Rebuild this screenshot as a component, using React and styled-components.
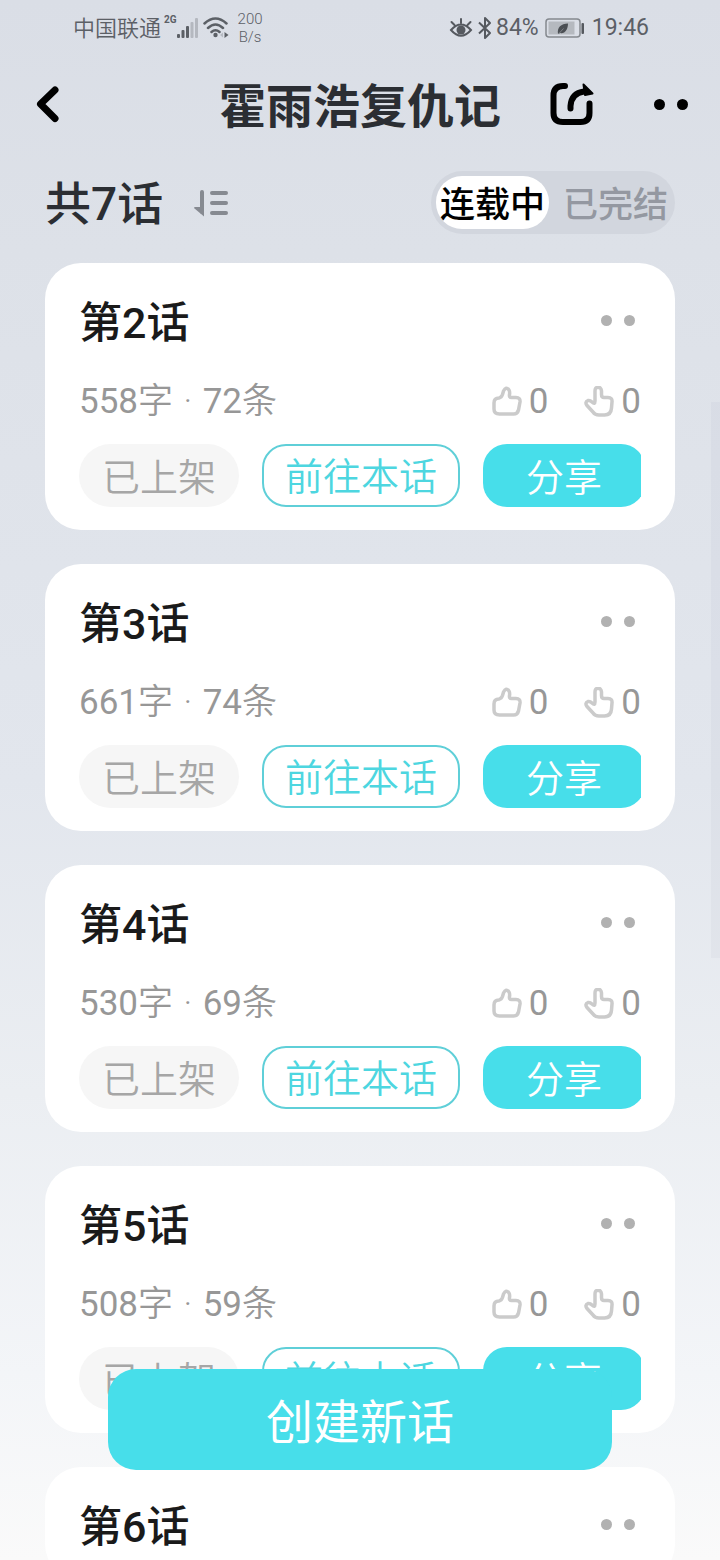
import React, { useState } from "react";
import styled, { createGlobalStyle } from "styled-components";

const GlobalStyle = createGlobalStyle`
  body {
    margin: 0;
  }

  * {
    box-sizing: border-box;
  }

  button {
    margin: 0;
    padding: 0;
    border: none;
    background: none;
    color: inherit;
    font: inherit;
    cursor: pointer;
  }
`;

const Page = styled.div`
  position: relative;
  display: flex;
  flex-direction: column;
  height: 100vh;
  overflow: hidden;
  background: linear-gradient(#dadee6 0%, #dde1e8 16%, #e2e6ed 50%, #ebeef2 70%, #f3f5f8 88%, #fafafa 100%);
  font-family: Roboto, "Noto Sans CJK SC", sans-serif;
  color: #2b2e33;
`;

const StatusBar = styled.div`
  display: flex;
  align-items: center;
  justify-content: space-between;
  height: 56px;
  padding: 0 71px 0 73px;
  flex-shrink: 0;
  font-size: 23px;
  line-height: 28px;
  font-weight: 350;
  color: #5c6066;
`;

const StatusGroup = styled.div`
  display: flex;
  align-items: center;
`;

const Carrier = styled.span`
  padding-top: 2px;
  font-size: 22px;
`;

const NetworkType = styled.span`
  align-self: flex-start;
  padding: 4px 0 0 3px;
  font-size: 10px;
  line-height: 12px;
  font-weight: 700;
`;

const NetSpeed = styled.span`
  margin-left: 7px;
  font-size: 15px;
  line-height: 18px;
  text-align: center;
`;

const Digits = styled.span`
  font-weight: 400;
`;

const Power = styled.span`
  display: flex;
  align-items: center;
  gap: 6px;
  margin: 0 7px 0 3px;
`;

const Header = styled.header`
  display: grid;
  grid-template-columns: 1fr auto 1fr;
  align-items: center;
  height: 96px;
  padding: 0 32px;
  flex-shrink: 0;
`;

const Title = styled.h1`
  margin: 0;
  padding-top: 6px;
  font-size: 47px;
  line-height: 64px;
  font-weight: 700;
`;

const IconButton = styled.button`
  display: flex;
  justify-self: start;
`;

const HeaderActions = styled.div`
  display: flex;
  align-items: center;
  justify-content: space-between;
  padding-left: 49px;
`;

const Dots = styled.span`
  display: flex;
  gap: 12px;

  &::before,
  &::after {
    content: "";
    width: 11px;
    height: 11px;
    border-radius: 50%;
    background: ${(props) => (props.$muted ? "#b1b1b1" : "#000")};
  }
`;

const Toolbar = styled.div`
  display: flex;
  align-items: center;
  height: 111px;
  padding: 0 45px 10px;
  flex-shrink: 0;
`;

const Count = styled.h2`
  margin: 0;
  padding-top: 3px;
  font-size: 46px;
  line-height: 60px;
  font-weight: 500;
`;

const SortButton = styled.button`
  display: flex;
  margin-left: 31px;
`;

const Segment = styled.div`
  display: flex;
  align-items: center;
  gap: 10px;
  margin-left: auto;
  padding: 5px 3px 5px 5px;
  border-radius: 32px;
  background: #d2d6de;
`;

const SegmentButton = styled.button`
  height: 53px;
  padding: 6px 4px 0;
  border-radius: 26px;
  font-size: 35px;
  line-height: 47px;
  font-weight: 500;
  color: ${(props) => (props.$active ? "#000" : "#9498a1")};
  background: ${(props) => (props.$active ? "#fff" : "transparent")};
`;

const List = styled.main`
  display: flex;
  flex-direction: column;
  gap: 34px;
  flex: 1;
  min-height: 0;
  padding: 0 45px;
  overflow-y: auto;
  scrollbar-width: none;
`;

const Card = styled.article`
  flex-shrink: 0;
  padding: 24px 34px 23px;
  border-radius: 36px;
  background: #fff;
`;

const CardHead = styled.div`
  display: flex;
  align-items: center;
  justify-content: space-between;
  padding-right: 6px;
`;

const CardTitle = styled.h3`
  margin: 0;
  padding-top: 6px;
  font-size: 43px;
  line-height: 60px;
  font-weight: 500;
  color: #1a1a1a;
`;

const CardMeta = styled.div`
  display: flex;
  align-items: center;
  justify-content: space-between;
  margin: 24px 0 18px;
  font-size: 35px;
  line-height: 49px;
  font-weight: 350;
  color: #979797;
`;

const Separator = styled.span`
  margin: 0 2px;
`;

const Votes = styled.div`
  display: flex;
  gap: 36px;
`;

const Vote = styled.button`
  display: flex;
  align-items: center;
  gap: 7px;
`;

// the last button runs a little past the edge of the row
const CardActions = styled.div`
  display: flex;
  gap: 23px;
  overflow: hidden;
`;

const ActionButton = styled.button`
  flex: 160 1 160px;
  height: 63px;
  padding-top: 6px;
  border-radius: 24px;
  font-size: 38px;
  line-height: 53px;
  font-weight: 350;
`;

const StateButton = styled(ActionButton)`
  border-radius: 32px;
  background: #f6f6f6;
  color: #a6a6a6;
`;

const OutlineButton = styled(ActionButton)`
  flex: 198 1 198px;
  padding-top: 4px;
  border: 2px solid #5fcfd8;
  color: #4dd6e0;
`;

const ShareButton = styled(ActionButton)`
  flex: 162 1 162px;
  margin-right: -4px;
  background: #47deea;
  color: #fff;
`;

const ScrollThumb = styled.div`
  position: absolute;
  top: 402px;
  right: 0;
  width: 9px;
  height: 556px;
  background: rgba(120, 125, 150, 0.05);
`;

const CreateButton = styled.button`
  position: absolute;
  right: 15%;
  bottom: 90px;
  left: 15%;
  height: 101px;
  padding-top: 6px;
  border-radius: 28px;
  background: #47deea;
  color: #fff;
  font-size: 47px;
  line-height: 64px;
`;

const SignalIcon = () => (
  <svg width="22" height="22" viewBox="0 0 22 22" fill="#5c6066" aria-hidden="true">
    <rect x="0" y="17" width="3" height="4" rx="1" />
    <rect x="4.500" y="13" width="3" height="8" rx="1" />
    <rect x="9" y="9" width="3" height="12" rx="1" />
    <rect x="13.500" y="5" width="3" height="16" rx="1" opacity=".3" />
    <rect x="18" y="1" width="3" height="20" rx="1" opacity=".3" />
  </svg>
);

const WifiIcon = () => (
  <svg width="32" height="24" viewBox="-4 0 32 24" fill="none" stroke="#5c6066" strokeWidth="2.500" strokeLinecap="round" aria-hidden="true">
    <path d="M1.500 7.500Q12.500 -2.500 23.500 7.500M5 12Q12.500 5 20 12M8.500 16Q12.500 12.500 16.500 16" />
    <circle cx="12.500" cy="19" r="2.200" fill="#5c6066" stroke="none" />
    <path d="M21.500 16l4 3-4 3z" fill="#5c6066" stroke="none" />
    <path d="M20 16.500l-3 2.500 3 2.500z" fill="#b6bac2" stroke="none" />
  </svg>
);

const EyeIcon = () => (
  <svg width="24" height="22" viewBox="0 0 24 22" fill="none" stroke="#55595f" strokeWidth="2" strokeLinecap="round" aria-hidden="true">
    <path d="M2 13Q12 2 22 13Q12 24.500 2 13zM12 6V2M5.500 8L2.500 5M18.500 8l3-3" />
    <circle cx="12" cy="13" r="4.500" fill="#55595f" stroke="none" />
  </svg>
);

const BluetoothIcon = () => (
  <svg width="20" height="24" viewBox="-5 0 20 24" fill="none" stroke="#55595f" strokeWidth="2" strokeLinejoin="round" aria-hidden="true">
    <path d="M1 6.500L12 17l-5 5V2l5 5L1 17.500" />
  </svg>
);

const BatteryIcon = () => (
  <svg width="40" height="20" viewBox="0 0 40 20" fill="none" aria-hidden="true">
    <rect x="1" y="1" width="34" height="18" rx="3" stroke="#85898f" strokeWidth="1.500" />
    <rect x="3.500" y="3.500" width="26" height="13" fill="#b5b9bf" />
    <rect x="36.500" y="5" width="2.500" height="11" rx="1" fill="#55595f" />
    <path d="M13 16c-1-7 3-10 10-10.500 0 6-3 10.500-8 9.500z" fill="#4b4f54" />
    <path d="M13.500 16l5-5.500" stroke="#8d9196" strokeWidth=".8" />
  </svg>
);

const BackIcon = () => (
  <svg width="32" height="40" viewBox="0 0 32 40" fill="none" stroke="#000" strokeWidth="7" strokeLinecap="round" strokeLinejoin="round" aria-hidden="true">
    <path d="M23 6L8.500 20 23 34.500" />
  </svg>
);

const ShareIcon = () => (
  <svg width="46" height="44" viewBox="0 0 46 44" fill="none" stroke="#000" strokeWidth="6" strokeLinecap="round" aria-hidden="true">
    <path d="M15 4H13Q3.500 4 3.500 13.500v17.500Q3.500 40 13 40h17.500Q39.500 40 39.500 31V21.500" />
    <path d="M20.500 26.500v-2.500Q21.500 11 34 9.500" />
    <path d="M33.500 2.500L42.500 11.500 35 13z" fill="#000" strokeWidth="2" strokeLinejoin="round" />
  </svg>
);

const SortIcon = () => (
  <svg width="34" height="30" viewBox="0 0 34 30" fill="none" stroke="#868a91" strokeWidth="4" strokeLinecap="round" aria-hidden="true">
    <path d="M8 4v20M18 5h14M18 15h14M18 25h14" />
    <path d="M10 28.500V19H1q-1.500.500-.5 1.500z" fill="#868a91" stroke="none" />
  </svg>
);

const LikeIcon = () => (
  <svg width="30" height="32" viewBox="0 1 30 32" fill="none" stroke="#cbcbcb" strokeWidth="3.500" strokeLinejoin="round" aria-hidden="true">
    <path d="M7 13Q9.500 12.500 10.500 9.500L11.500 6Q14 1 17 5Q18 7 17.500 9.500Q17 12.500 19.500 12.500H24Q28.500 12.500 28 17L26.500 25Q25.500 29 21.500 29H7.500Q2 29 2 24V18Q2 13 7 13z" />
  </svg>
);

const PokeIcon = () => (
  <svg width="30" height="32" viewBox="0 1 30 32" fill="none" stroke="#cbcbcb" strokeWidth="3.500" strokeLinejoin="round" aria-hidden="true">
    <path d="M11 16V6Q11 2 14 2.500Q17 2 17.500 6V9.500Q17.500 12.500 20 12.500H24Q28.500 12.500 28 17L27.500 23Q27 30 20.500 30H15Q11 30 9 27L3 20.500Q0.500 17 4 15.500Q6 15 8 17Q11 20 11 16z" />
  </svg>
);

const chapters = [
  { no: 2, words: 558, lines: 72 },
  { no: 3, words: 661, lines: 74 },
  { no: 4, words: 530, lines: 69 },
  { no: 5, words: 508, lines: 59 },
  { no: 6 },
];

const ChapterCard = ({ no, words, lines }) => (
  <Card>
    <CardHead>
      <CardTitle>第{no}话</CardTitle>
      <IconButton aria-label="更多">
        <Dots $muted />
      </IconButton>
    </CardHead>
    {words && (
      <>
        <CardMeta>
          <span>
            <Digits>{words}</Digits>字 <Separator>·</Separator> <Digits>{lines}</Digits>条
          </span>
          <Votes>
            <Vote aria-label="赞">
              <LikeIcon />
              <Digits>0</Digits>
            </Vote>
            <Vote aria-label="戳">
              <PokeIcon />
              <Digits>0</Digits>
            </Vote>
          </Votes>
        </CardMeta>
        <CardActions>
          <StateButton>已上架</StateButton>
          <OutlineButton>前往本话</OutlineButton>
          <ShareButton>分享</ShareButton>
        </CardActions>
      </>
    )}
  </Card>
);

const App = () => {
  const [tab, setTab] = useState("连载中");

  return (
    <Page>
      <GlobalStyle />
      <StatusBar>
        <StatusGroup>
          <Carrier>中国联通</Carrier>
          <NetworkType>2G</NetworkType>
          <SignalIcon />
          <WifiIcon />
          <NetSpeed>
            200
            <br />
            B/s
          </NetSpeed>
        </StatusGroup>
        <StatusGroup>
          <EyeIcon />
          <BluetoothIcon />
          <Power>
            <Digits>84%</Digits>
            <BatteryIcon />
          </Power>
          <Digits>19:46</Digits>
        </StatusGroup>
      </StatusBar>

      <Header>
        <IconButton aria-label="返回">
          <BackIcon />
        </IconButton>
        <Title>霍雨浩复仇记</Title>
        <HeaderActions>
          <IconButton aria-label="分享作品">
            <ShareIcon />
          </IconButton>
          <IconButton aria-label="更多">
            <Dots />
          </IconButton>
        </HeaderActions>
      </Header>

      <Toolbar>
        <Count>共7话</Count>
        <SortButton aria-label="排序">
          <SortIcon />
        </SortButton>
        <Segment>
          {["连载中", "已完结"].map((name) => (
            <SegmentButton key={name} $active={tab === name} onClick={() => setTab(name)}>
              {name}
            </SegmentButton>
          ))}
        </Segment>
      </Toolbar>

      <List>
        {chapters.map((chapter) => (
          <ChapterCard key={chapter.no} {...chapter} />
        ))}
      </List>

      <ScrollThumb />
      <CreateButton>创建新话</CreateButton>
    </Page>
  );
};

export default App;
